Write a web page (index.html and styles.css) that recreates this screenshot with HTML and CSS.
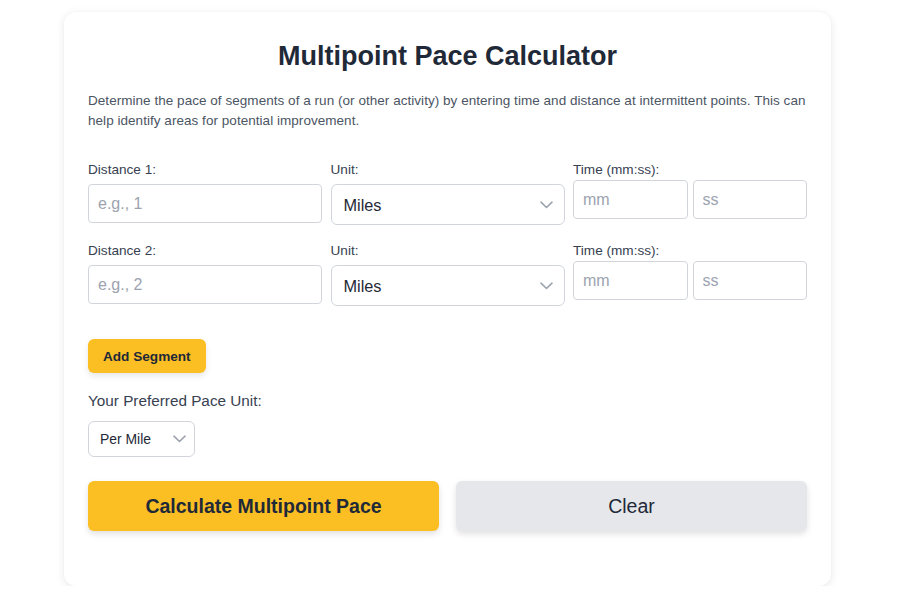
FILE: index.html
```html
<!DOCTYPE html>
<html lang="en">
<head>
<meta charset="utf-8">
<title>Multipoint Pace Calculator</title>
<link rel="stylesheet" href="styles.css">
</head>
<body>
<div class="card">
  <h1 class="title">Multipoint Pace Calculator</h1>
  <p class="intro">Determine the pace of segments of a run (or other activity) by entering time and distance at intermittent points. This can help identify areas for potential improvement.</p>

  <div class="segments">
    <div class="segment">
      <div class="col">
        <label class="label">Distance 1:</label>
        <input class="input dist" type="text" placeholder="e.g., 1">
      </div>
      <div class="col">
        <label class="label">Unit:</label>
        <div class="select-wrap">
          <select class="select"><option>Miles</option></select>
          <svg class="chev" width="13" height="8" viewBox="0 0 13 8"><path d="M1 1.2 L6.5 6.5 L12 1.2" fill="none" stroke="#9ca3af" stroke-width="1.6" stroke-linecap="round" stroke-linejoin="round"/></svg>
        </div>
      </div>
      <div class="col">
        <label class="label label-time">Time (mm:ss):</label>
        <div class="time">
          <input class="input" type="text" placeholder="mm">
          <input class="input" type="text" placeholder="ss">
        </div>
      </div>
    </div>

    <div class="segment">
      <div class="col">
        <label class="label">Distance 2:</label>
        <input class="input dist" type="text" placeholder="e.g., 2">
      </div>
      <div class="col">
        <label class="label">Unit:</label>
        <div class="select-wrap">
          <select class="select"><option>Miles</option></select>
          <svg class="chev" width="13" height="8" viewBox="0 0 13 8"><path d="M1 1.2 L6.5 6.5 L12 1.2" fill="none" stroke="#9ca3af" stroke-width="1.6" stroke-linecap="round" stroke-linejoin="round"/></svg>
        </div>
      </div>
      <div class="col">
        <label class="label label-time">Time (mm:ss):</label>
        <div class="time">
          <input class="input" type="text" placeholder="mm">
          <input class="input" type="text" placeholder="ss">
        </div>
      </div>
    </div>
  </div>

  <button class="btn-add">Add Segment</button>

  <label class="pref-label">Your Preferred Pace Unit:</label>
  <div class="select-wrap small">
    <select class="select select-small"><option>Per Mile</option></select>
    <svg class="chev chev-small" width="13" height="8" viewBox="0 0 13 8"><path d="M1 1.2 L6.5 6.5 L12 1.2" fill="none" stroke="#9ca3af" stroke-width="1.6" stroke-linecap="round" stroke-linejoin="round"/></svg>
  </div>

  <div class="actions">
    <button class="btn btn-calc">Calculate Multipoint Pace</button>
    <button class="btn btn-clear">Clear</button>
  </div>
</div>
</body>
</html>
```
FILE: styles.css
```css
* { box-sizing: border-box; }
html, body { margin: 0; padding: 0; background: #ffffff; }
body {
  font-family: "Liberation Sans", Arial, sans-serif;
  color: #1f2937;
}
.card {
  width: 767px;
  margin: 12px 0 0 64px;
  padding: 28px 24px 55px 24px;
  background: #ffffff;
  border-radius: 12px;
  box-shadow: 0 2px 10px rgba(0, 0, 0, 0.09), 0 0 2px rgba(0, 0, 0, 0.04);
}
.title {
  margin: 0;
  text-align: center;
  font-size: 27px;
  line-height: 32px;
  font-weight: 700;
  color: #1f2937;
}
.intro {
  margin: 19px 0 0 0;
  font-size: 13.5px;
  letter-spacing: 0.04px;
  line-height: 19.5px;
  color: #4b5563;
}
.segments {
  margin-top: 32px;
  display: flex;
  flex-direction: column;
  gap: 18px;
}
.segment {
  display: grid;
  grid-template-columns: 234px 234px 234px;
  column-gap: 8.5px;
}
.col { display: flex; flex-direction: column; }
.label {
  display: block;
  font-size: 13.6px;
  line-height: 16px;
  color: #374151;
  margin-bottom: 6px;
}
.label-time { margin-bottom: 2px; }
.input {
  width: 100%;
  height: 39px;
  border: 1px solid #d1d5db;
  border-radius: 4px;
  padding: 0 9px;
  font-family: "Liberation Sans", Arial, sans-serif;
  font-size: 16px;
  color: #1f2937;
  background: #fff;
  outline: none;
}
.input::placeholder { color: #9ca3af; }
.time {
  display: flex;
  gap: 5px;
}
.time .input { flex: 1; min-width: 0; }
.select-wrap { position: relative; }
.select {
  -webkit-appearance: none;
  appearance: none;
  width: 100%;
  height: 41px;
  border: 1px solid #d1d5db;
  border-radius: 6px;
  padding: 0 12px;
  font-family: "Liberation Sans", Arial, sans-serif;
  font-size: 16.3px;
  color: #1f2937;
  background: #fff;
  outline: none;
}
.chev {
  position: absolute;
  right: 12px;
  top: 17px;
  pointer-events: none;
}
.btn-add {
  display: block;
  margin-top: 33px;
  height: 34px;
  padding: 0 15px;
  border: none;
  border-radius: 6px;
  background: #fbbf24;
  font-family: "Liberation Sans", Arial, sans-serif;
  font-size: 13.6px;
  font-weight: 700;
  color: #1f2937;
  box-shadow: 0 3px 6px rgba(0, 0, 0, 0.1);
}
.pref-label {
  display: block;
  margin-top: 19px;
  font-size: 15.3px;
  line-height: 18px;
  color: #374151;
}
.select-wrap.small {
  width: 107px;
  margin-top: 11px;
}
.select-small {
  height: 36px;
  padding: 0 11px;
  font-size: 13.9px;
}
.chev-small { right: 9px; top: 14px; }
.actions {
  display: flex;
  gap: 17px;
  margin-top: 24px;
}
.btn {
  flex: 1;
  height: 50px;
  border: none;
  border-radius: 6px;
  font-family: "Liberation Sans", Arial, sans-serif;
  font-size: 19.5px;
  color: #1f2937;
  box-shadow: 0 3px 6px rgba(0, 0, 0, 0.12);
}
.btn-calc { background: #fbbf24; font-weight: 700; }
.btn-clear { background: #e5e7eb; font-weight: 400; }
```
